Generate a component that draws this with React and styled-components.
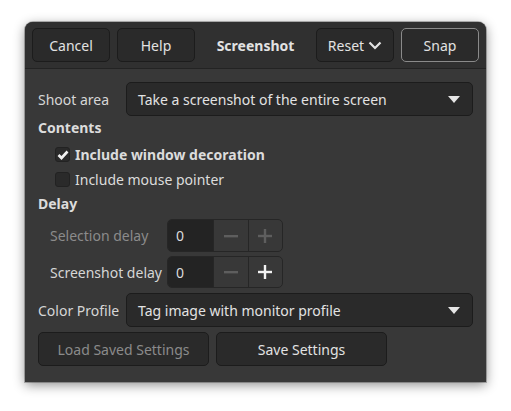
import styled, { createGlobalStyle } from 'styled-components';

const GlobalStyle = createGlobalStyle`
  html, body {
    margin: 0;
    padding: 0;
    background: #ffffff;
  }
  body {
    font-family: "Noto Sans", "DejaVu Sans", sans-serif;
    font-size: 14px;
  }
`;

const Page = styled.div`
  padding: 22px 0 0 25px;
  height: 411px;
  box-sizing: border-box;
`;

const Dialog = styled.div`
  width: 461px;
  height: 360px;
  background: #383838;
  border-radius: 8px 8px 0 0;
  box-shadow: 0 3px 12px rgba(0, 0, 0, 0.45), 0 0 0 1px rgba(0, 0, 0, 0.25);
  color: #dcdcdc;
  display: flex;
  flex-direction: column;
  overflow: hidden;
`;

const HeaderBar = styled.div`
  height: 46px;
  background: #303030;
  border-bottom: 1px solid #232323;
  display: flex;
  align-items: center;
  padding: 0 7px;
  gap: 7px;
`;

const Title = styled.div`
  flex: 1;
  text-align: center;
  font-weight: bold;
  color: #e2e2e2;
`;

const Button = styled.button`
  width: ${p => p.$w || 78}px;
  height: 34px;
  box-sizing: border-box;
  background: #2a2a2a;
  border: 1px solid ${p => (p.$suggested ? '#8a8a8a' : '#1c1c1c')};
  border-radius: 5px;
  color: ${p => (p.$disabled ? '#8b8b8b' : '#e2e2e2')};
  font-family: inherit;
  font-size: 14px;
  display: flex;
  align-items: center;
  justify-content: center;
  gap: 4px;
  padding: 0;
`;

const Body = styled.div`
  padding: 13px 13px 0 13px;
  display: flex;
  flex-direction: column;
`;

const Row = styled.div`
  display: flex;
  align-items: center;
  gap: 8px;
  margin-top: ${p => p.$mt || 0}px;
`;

const Label = styled.div`
  width: 80px;
  white-space: nowrap;
  color: #d6d6d6;
`;

const Combo = styled.div`
  flex: 1;
  height: 34px;
  box-sizing: border-box;
  background: #2a2a2a;
  border: 1px solid #1c1c1c;
  border-radius: 5px;
  display: flex;
  align-items: center;
  justify-content: space-between;
  padding: 0 12px 0 11px;
  color: #e2e2e2;
`;

const Heading = styled.div`
  font-weight: bold;
  color: #dcdcdc;
  margin-top: ${p => p.$mt || 0}px;
  line-height: 20px;
`;

const CheckRow = styled.div`
  display: flex;
  align-items: center;
  gap: 5px;
  padding-left: 17px;
  height: 25px;
  margin-top: ${p => p.$mt || 0}px;
  font-weight: ${p => (p.$bold ? 'bold' : 'normal')};
  color: #dcdcdc;
`;

const Box = styled.div`
  width: 15px;
  height: 15px;
  box-sizing: border-box;
  border: 1px solid #222;
  border-radius: 3px;
  background: #2a2a2a;
  display: flex;
  align-items: center;
  justify-content: center;
`;

const SpinRow = styled.div`
  display: flex;
  align-items: center;
  padding-left: 12px;
  margin-top: ${p => p.$mt || 0}px;
`;

const SpinLabel = styled.div`
  width: 117px;
  white-space: nowrap;
  color: ${p => (p.$disabled ? '#8b8b8b' : '#d6d6d6')};
`;

const Spin = styled.div`
  display: flex;
  width: 116px;
  height: ${p => p.$h || 33}px;
  box-sizing: border-box;
  border: 1px solid #262626;
  border-radius: 5px;
  overflow: hidden;
  background: #383838;
`;

const SpinEntry = styled.div`
  width: 45px;
  background: #232323;
  display: flex;
  align-items: center;
  padding-left: 8px;
  box-sizing: border-box;
  color: #dcdcdc;
`;

const SpinButton = styled.div`
  flex: 1;
  display: flex;
  align-items: center;
  justify-content: center;
  border-left: 1px solid #262626;
`;

const Actions = styled.div`
  display: flex;
  gap: 7px;
  margin-top: 5px;
`;

const Arrow = () => (
  <svg width="12" height="7" viewBox="0 0 12 7">
    <path d="M0 0 L12 0 L6 7 Z" fill="#e6e6e6" />
  </svg>
);

const Chevron = () => (
  <svg width="14" height="9" viewBox="0 0 14 9">
    <path d="M1.5 1.5 L7 7 L12.5 1.5" fill="none" stroke="#e2e2e2" strokeWidth="2.2" />
  </svg>
);

const Check = () => (
  <svg width="12" height="10" viewBox="0 0 12 10">
    <path d="M1.5 5 L4.5 8 L10.5 1.5" fill="none" stroke="#f0f0f0" strokeWidth="2.6" />
  </svg>
);

const Minus = ({ color }) => (
  <svg width="14" height="14" viewBox="0 0 14 14">
    <rect x="0" y="6" width="14" height="2.4" fill={color} />
  </svg>
);

const Plus = ({ color }) => (
  <svg width="14" height="14" viewBox="0 0 14 14">
    <rect x="0" y="5.8" width="14" height="2.4" fill={color} />
    <rect x="5.8" y="0" width="2.4" height="14" fill={color} />
  </svg>
);

export default function App() {
  return (
    <Page>
      <GlobalStyle />
      <Dialog>
        <HeaderBar>
          <Button>Cancel</Button>
          <Button>Help</Button>
          <Title>Screenshot</Title>
          <Button>Reset <Chevron /></Button>
          <Button $suggested>Snap</Button>
        </HeaderBar>
        <Body>
          <Row>
            <Label>Shoot area</Label>
            <Combo>
              <span>Take a screenshot of the entire screen</span>
              <Arrow />
            </Combo>
          </Row>
          <Heading $mt={2}>Contents</Heading>
          <CheckRow $bold $mt={4}>
            <Box><Check /></Box>
            Include window decoration
          </CheckRow>
          <CheckRow>
            <Box />
            Include mouse pointer
          </CheckRow>
          <Heading $mt={2}>Delay</Heading>
          <SpinRow $mt={5}>
            <SpinLabel $disabled>Selection delay</SpinLabel>
            <Spin>
              <SpinEntry>0</SpinEntry>
              <SpinButton><Minus color="#5e5e5e" /></SpinButton>
              <SpinButton><Plus color="#5e5e5e" /></SpinButton>
            </Spin>
          </SpinRow>
          <SpinRow $mt={4}>
            <SpinLabel>Screenshot delay</SpinLabel>
            <Spin $h={32}>
              <SpinEntry>0</SpinEntry>
              <SpinButton><Minus color="#5e5e5e" /></SpinButton>
              <SpinButton><Plus color="#f2f2f2" /></SpinButton>
            </Spin>
          </SpinRow>
          <Row $mt={5}>
            <Label>Color Profile</Label>
            <Combo>
              <span>Tag image with monitor profile</span>
              <Arrow />
            </Combo>
          </Row>
          <Actions>
            <Button $w={171} $disabled>Load Saved Settings</Button>
            <Button $w={171}>Save Settings</Button>
          </Actions>
        </Body>
      </Dialog>
    </Page>
  );
}
